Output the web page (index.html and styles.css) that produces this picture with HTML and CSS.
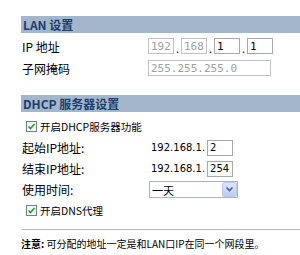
FILE: index.html
```html
<!DOCTYPE html>
<html lang="zh-CN">
<head>
  <meta charset="UTF-8" />
  <title>LAN 设置</title>
  <link rel="stylesheet" href="styles.css">
</head>
<body>
  <div class="page">
    <div class="bar">LAN 设置</div>
    <div class="row first">
      <span class="label">IP 地址</span>
      <span class="ip">
        <input class="oct" type="text" value="192" disabled><span class="dot">.</span>
        <input class="oct" type="text" value="168" disabled><span class="dot">.</span>
        <input class="oct" type="text" value="1"><span class="dot">.</span>
        <input class="oct" type="text" value="1">
      </span>
    </div>
    <div class="row">
      <span class="label">子网掩码</span>
      <input class="mask" type="text" value="255.255.255.0" disabled>
    </div>

    <div class="bar second">DHCP 服务器设置</div>
    <div class="row sub check top">
      <span class="box"><svg width="9" height="9" viewBox="0 0 9 9"><path d="M1.5 4.5 L3.5 6.5 L7.5 2" fill="none" stroke="#21a121" stroke-width="1.6"/></svg></span>开启DHCP服务器功能
    </div>
    <div class="row sub">
      <span class="label">起始IP地址:</span>
      <span class="prefix">192.168.1.</span><input class="last" type="text" value="2">
    </div>
    <div class="row sub">
      <span class="label">结束IP地址:</span>
      <span class="prefix">192.168.1.</span><input class="last" type="text" value="254">
    </div>
    <div class="row sub">
      <span class="label">使用时间:</span>
      <span class="select">
        <span class="value">一天</span>
        <span class="arrow"><svg width="9" height="7" viewBox="0 0 9 7"><path d="M1.5 1.5 L4.5 4.5 L7.5 1.5" fill="none" stroke="#4d6185" stroke-width="1.6"/></svg></span>
      </span>
    </div>
    <div class="row sub check">
      <span class="box"><svg width="9" height="9" viewBox="0 0 9 9"><path d="M1.5 4.5 L3.5 6.5 L7.5 2" fill="none" stroke="#21a121" stroke-width="1.6"/></svg></span>开启DNS代理
    </div>

    <div class="note"><b>注意:</b> 可分配的地址一定是和LAN口IP在同一个网段里。</div>
  </div>
</body>
</html>
```

FILE: styles.css
```css
body {
  margin: 0;
  background: #fff;
  overflow: hidden;
  font-family: "Noto Sans CJK SC", "DejaVu Sans", sans-serif;
  font-size: 12px;
  color: #000;
}

.page {
  width: 420px;
  margin-left: 21px;
  padding-top: 16px;
}

.bar {
  height: 17px;
  line-height: 17px;
  padding-left: 2px;
  background: #a3b6cc;
  color: #1e3e6c;
  font-weight: bold;
  font-size: 12px;
}

.bar.second {
  margin-top: 16px;
}

.row {
  display: flex;
  align-items: center;
  height: 22px;
}

.row.first {
  margin-top: 2px;
}

.row.sub {
  height: 21px;
}

.row.top {
  margin-top: 4px;
}

.label {
  width: 126px;
  padding-left: 1px;
}

.ip {
  display: flex;
  align-items: center;
}

input[type=text] {
  box-sizing: border-box;
  height: 16px;
  border: 1px solid #a8a8a8;
  padding: 0 2px;
  font-family: "DejaVu Sans Mono", monospace;
  font-size: 11px;
  color: #000;
  background: #fff;
}

input[type=text]:disabled {
  color: #a0a0a0;
  border-color: #c2c2c2;
}

.oct {
  width: 26px;
}

.dot {
  width: 7px;
  text-align: center;
  font-size: 11px;
  line-height: 16px;
  padding-top: 4px;
}

.mask {
  width: 123px;
}

.prefix {
  font-family: "DejaVu Sans", sans-serif;
  font-size: 10px;
  margin-left: 3px;
  margin-right: 2px;
}

input.last {
  width: 26px;
  font-family: "DejaVu Sans", sans-serif;
  font-size: 10px;
}

.select {
  box-sizing: border-box;
  display: flex;
  align-items: center;
  justify-content: space-between;
  width: 89px;
  height: 17px;
  margin-left: 1px;
  border: 1px solid #a8b4c4;
  background: #fff;
}

.select .value {
  padding-left: 2px;
  font-size: 11px;
}

.select .arrow {
  box-sizing: border-box;
  display: flex;
  align-items: center;
  justify-content: center;
  width: 15px;
  height: 15px;
  border: 1px solid #b9cbef;
  border-radius: 2px;
  background: linear-gradient(#dce6fb, #bccdf2);
}

.check {
  padding-left: 5px;
  font-size: 10.5px;
}

.box {
  box-sizing: border-box;
  display: flex;
  align-items: center;
  justify-content: center;
  width: 11px;
  height: 11px;
  margin-right: 3px;
  border: 1px solid #6c7f94;
  background: #f4f4f0;
}

.note {
  margin-top: 8px;
  border-top: 1px solid #b8b8b8;
  padding-top: 6px;
  font-size: 10px;
}
```
